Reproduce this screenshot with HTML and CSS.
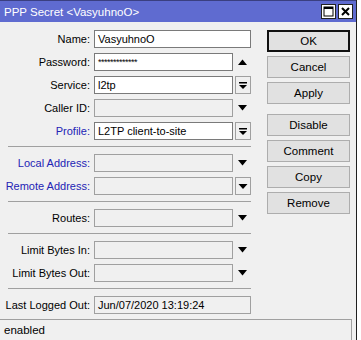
FILE: index.html
```html
<!DOCTYPE html>
<html>
<head>
<meta charset="utf-8">
<link rel="stylesheet" href="styles.css">
</head>
<body>
<div class="desk">
<div class="win">
  <div class="titlebar">
    <span class="title">PPP Secret &lt;VasyuhnoO&gt;</span>
    <span class="tbtns">
      <span class="tbtn"><svg width="11" height="11" viewBox="0 0 11 11"><rect x="1" y="1" width="9" height="9" fill="none" stroke="#000" stroke-width="1"/><rect x="1" y="1" width="9" height="2" fill="#000"/></svg></span>
      <span class="tbtn"><svg width="11" height="11" viewBox="0 0 11 11"><path d="M2 2 L9 9 M9 2 L2 9" stroke="#000" stroke-width="2"/></svg></span>
    </span>
  </div>
  <div class="main">
    <div class="form">
      <div class="row"><label class="lbl">Name:</label><div class="inp wide white">VasyuhnoO</div></div>
      <div class="row"><label class="lbl">Password:</label><div class="inp white pw">*************</div><span class="arr"><svg width="9" height="6" viewBox="0 0 9 6"><path d="M0 6 L4.5 0.5 L9 6Z" fill="#000"/></svg></span></div>
      <div class="row"><label class="lbl">Service:</label><div class="inp white">l2tp</div><span class="dd"><svg width="14" height="16" viewBox="0 0 14 16"><rect x="3" y="5" width="8" height="1.5" fill="#000"/><path d="M3 8 L11 8 L7 12Z" fill="#000"/></svg></span></div>
      <div class="row"><label class="lbl">Caller ID:</label><div class="inp"></div><span class="arr"><svg width="9" height="6" viewBox="0 0 9 6"><path d="M0 0 L9 0 L4.5 5.5Z" fill="#000"/></svg></span></div>
      <div class="row"><label class="lbl blue">Profile:</label><div class="inp white">L2TP client-to-site</div><span class="dd"><svg width="14" height="16" viewBox="0 0 14 16"><rect x="3" y="5" width="8" height="1.5" fill="#000"/><path d="M3 8 L11 8 L7 12Z" fill="#000"/></svg></span></div>
      <div class="sep"></div>
      <div class="row"><label class="lbl blue">Local Address:</label><div class="inp"></div><span class="arr"><svg width="9" height="6" viewBox="0 0 9 6"><path d="M0 0 L9 0 L4.5 5.5Z" fill="#000"/></svg></span></div>
      <div class="row"><label class="lbl blue">Remote Address:</label><div class="inp"></div><span class="dd"><svg width="14" height="16" viewBox="0 0 14 16"><path d="M2.5 6 L11.5 6 L7 11Z" fill="#000"/></svg></span></div>
      <div class="sep"></div>
      <div class="row"><label class="lbl">Routes:</label><div class="inp"></div><span class="arr"><svg width="9" height="6" viewBox="0 0 9 6"><path d="M0 0 L9 0 L4.5 5.5Z" fill="#000"/></svg></span></div>
      <div class="sep"></div>
      <div class="row"><label class="lbl">Limit Bytes In:</label><div class="inp"></div><span class="arr"><svg width="9" height="6" viewBox="0 0 9 6"><path d="M0 0 L9 0 L4.5 5.5Z" fill="#000"/></svg></span></div>
      <div class="row"><label class="lbl">Limit Bytes Out:</label><div class="inp"></div><span class="arr"><svg width="9" height="6" viewBox="0 0 9 6"><path d="M0 0 L9 0 L4.5 5.5Z" fill="#000"/></svg></span></div>
      <div class="sep"></div>
      <div class="row"><label class="lbl">Last Logged Out:</label><div class="inp wide">Jun/07/2020 13:19:24</div></div>
    </div>
    <div class="buttons">
      <div class="btn default">OK</div>
      <div class="btn">Cancel</div>
      <div class="btn">Apply</div>
      <div class="btn gapped">Disable</div>
      <div class="btn">Comment</div>
      <div class="btn">Copy</div>
      <div class="btn">Remove</div>
    </div>
  </div>
  <div class="status">enabled</div>
</div>
</div>
</body>
</html>
```
FILE: styles.css
```css
html, body {
  margin: 0;
  padding: 0;
  width: 361px;
  height: 340px;
  overflow: hidden;
  background: #ffffff;
}
.desk {
  display: flex;
  height: 340px;
}
.win {
  width: 356px;
  height: 340px;
  background: #f0f0f0;
  border-right: 1px solid #202020;
  display: flex;
  flex-direction: column;
  font-family: "Liberation Sans", Arial, sans-serif;
  font-size: 11px;
  color: #000;
}
.titlebar {
  height: 22px;
  background: #5f6bd0;
  border-top: 1px solid #3a3f80;
  box-sizing: border-box;
  display: flex;
  align-items: center;
  justify-content: space-between;
  padding: 0 3px 0 4px;
}
.title {
  color: #fff;
  font-size: 11.5px;
}
.tbtns {
  display: flex;
  gap: 2px;
}
.tbtn {
  width: 13px;
  height: 13px;
  background: #fff;
  border: 1px solid #222;
  display: flex;
  align-items: center;
  justify-content: center;
}
.main {
  display: flex;
  flex: 1;
  padding-top: 8px;
}
.form {
  width: 251px;
  display: flex;
  flex-direction: column;
}
.row {
  display: flex;
  align-items: center;
  height: 18px;
  margin-bottom: 5px;
}
.lbl {
  width: 90px;
  text-align: right;
  padding-right: 4px;
  white-space: nowrap;
}
.lbl.blue {
  color: #2323b5;
}
.inp {
  width: 139px;
  height: 18px;
  box-sizing: border-box;
  border: 1px solid #a0a0a0;
  background: #f0f0f0;
  padding: 0 3px;
  line-height: 16px;
  white-space: nowrap;
  overflow: hidden;
}
.inp.white {
  background: #fff;
  border-color: #7a7a7a;
}
.inp.pw {
  font-size: 9px;
  letter-spacing: -0.5px;
}
.inp.wide {
  width: 157px;
}
.arr {
  width: 18px;
  display: flex;
  justify-content: center;
  align-items: center;
}
.dd {
  margin-left: 2px;
  width: 16px;
  height: 18px;
  box-sizing: border-box;
  border: 1px solid #a0a0a0;
  background: #f0f0f0;
  display: flex;
  align-items: center;
  justify-content: center;
}
.sep {
  height: 0;
  border-top: 1px solid #a0a0a0;
  margin: 1px 0 7px 8px;
}
.buttons {
  display: flex;
  flex-direction: column;
  gap: 4px;
  margin-left: 16px;
}
.btn {
  width: 83px;
  height: 22px;
  box-sizing: border-box;
  border: 1px solid #adadad;
  background: #e1e1e1;
  display: flex;
  align-items: center;
  justify-content: center;
  font-size: 11.5px;
}
.btn.default {
  border: 2px solid #111;
}
.btn.gapped {
  margin-top: 6px;
}
.status {
  height: 21px;
  box-sizing: border-box;
  border-top: 1px solid #a0a0a0;
  border-right: 1px solid #a0a0a0;
  margin-right: 4px;
  padding: 2px 4px;
  line-height: 16px;
  font-size: 11.5px;
}
```
